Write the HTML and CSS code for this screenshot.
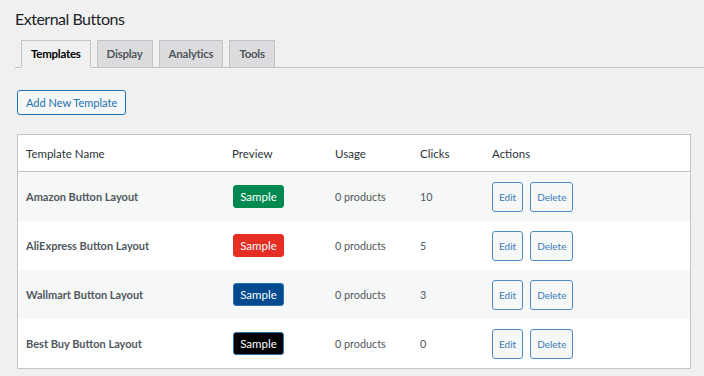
FILE: index.html
```html
<!DOCTYPE html>
<html lang="en">
   <head>
       <meta charset="UTF-8">
       <meta name="viewport" content="width=device-width, initial-scale=1.0">
       <title>External Buttons</title>
       <link rel="stylesheet" href="styles.css">
   </head>
   <body>
       <div class="wrap">
           <h1>External Buttons</h1>
           <nav class="tab-wrapper">
               <a href="#" class="tab tab-active">Templates</a>
               <a href="#" class="tab">Display</a>
               <a href="#" class="tab">Analytics</a>
               <a href="#" class="tab">Tools</a>
           </nav>

           <div class="content">
               <button class="button">Add New Template</button>

               <table class="templates">
                   <thead>
                       <tr>
                           <th class="col-name">Template Name</th>
                           <th class="col-preview">Preview</th>
                           <th class="col-usage">Usage</th>
                           <th class="col-clicks">Clicks</th>
                           <th>Actions</th>
                       </tr>
                   </thead>
                   <tbody>
                       <tr class="alt">
                           <td class="name">Amazon Button Layout</td>
                           <td><span class="sample sample-amazon">Sample</span></td>
                           <td>0 products</td>
                           <td>10</td>
                           <td class="actions"><button class="small">Edit</button><button class="small">Delete</button></td>
                       </tr>
                       <tr>
                           <td class="name">AliExpress Button Layout</td>
                           <td><span class="sample sample-ali">Sample</span></td>
                           <td>0 products</td>
                           <td>5</td>
                           <td class="actions"><button class="small">Edit</button><button class="small">Delete</button></td>
                       </tr>
                       <tr class="alt">
                           <td class="name">Wallmart Button Layout</td>
                           <td><span class="sample sample-walmart">Sample</span></td>
                           <td>0 products</td>
                           <td>3</td>
                           <td class="actions"><button class="small">Edit</button><button class="small">Delete</button></td>
                       </tr>
                       <tr>
                           <td class="name">Best Buy Button Layout</td>
                           <td><span class="sample sample-bestbuy">Sample</span></td>
                           <td>0 products</td>
                           <td>0</td>
                           <td class="actions"><button class="small">Edit</button><button class="small">Delete</button></td>
                       </tr>
                   </tbody>
               </table>
           </div>
       </div>
   </body>
</html>
```

FILE: styles.css
```css
body {
    font-family: Lato, "Noto Sans", sans-serif;
    background-color: #f0f0f1;
    color: #3c434a;
    margin: 0;
    padding: 0;
}
.wrap {
    padding: 0 13px 0 15px;
}
h1 {
    font-size: 16px;
    font-weight: 400;
    letter-spacing: -0.5px;
    color: #1d2327;
    margin: 0;
    padding: 6px 0 0;
    line-height: 25px;
}
.tab-wrapper {
    display: flex;
    gap: 6px;
    margin-top: 9px;
    padding-left: 6px;
    border-bottom: 1px solid #c3c4c7;
    margin-right: -13px;
}
.tab {
    display: block;
    padding: 4px 9px;
    font-size: 11.5px;
    letter-spacing: -0.25px;
    line-height: 18px;
    font-weight: 700;
    color: #50575e;
    text-decoration: none;
    background-color: #dcdcde;
    border: 1px solid #c3c4c7;
    border-bottom: none;
    margin-bottom: -1px;
    height: 27px;
    box-sizing: border-box;
}
.tab-active {
    background-color: #f0f0f1;
    color: #000;
    border-bottom: 1px solid #f0f0f1;
    height: 28px;
}
.content {
    padding-left: 2px;
}
.button {
    margin-top: 22px;
    font-family: inherit;
    font-size: 11px;
    color: #2271b1;
    background-color: #f6f7f7;
    border: 1px solid #2271b1;
    border-radius: 3px;
    height: 25px;
    padding: 0 8px;
    cursor: pointer;
}
.templates {
    margin-top: 19px;
    width: 100%;
    border-collapse: collapse;
    background-color: #fff;
    border: 1px solid #c3c4c7;
    font-size: 10.8px;
}
.templates th {
    text-align: left;
    font-size: 11.5px;
    font-weight: 400;
    color: #2c3338;
    height: 36px;
    padding: 0 8px;
    border-bottom: 1px solid #c3c4c7;
}
.templates td {
    height: 49px;
    padding: 0 8px;
    color: #50575e;
}
.templates tr.alt td {
    background-color: #f6f7f7;
}
.col-name {
    width: 190px;
}
.col-preview {
    width: 87px;
}
.col-usage {
    width: 69px;
}
.col-clicks {
    width: 56px;
}
.templates td.name {
    font-size: 11px;
    font-weight: 700;
    color: #50575e;
}
.sample {
    display: inline-block;
    width: 51px;
    height: 23px;
    line-height: 21px;
    box-sizing: border-box;
    text-align: center;
    color: #fff;
    border-radius: 3px;
    border: 1px solid transparent;
    font-size: 11.5px;
    margin-left: 1px;
}
.sample-amazon {
    background-color: #00894f;
    border-color: #00894f;
}
.sample-ali {
    background-color: #e62e24;
    border-color: #e62e24;
}
.sample-walmart {
    background-color: #014a8f;
    border-color: #2a72b0;
}
.sample-bestbuy {
    background-color: #000;
    border-color: #2a72b0;
}
.actions {
    white-space: nowrap;
}
.small {
    font-family: inherit;
    font-size: 10px;
    color: #3d7bb7;
    background-color: #f6f7f7;
    border: 1px solid #4f8cc4;
    border-radius: 3px;
    height: 30px;
    padding: 0 6px;
    margin-right: 7px;
    cursor: pointer;
}
```
